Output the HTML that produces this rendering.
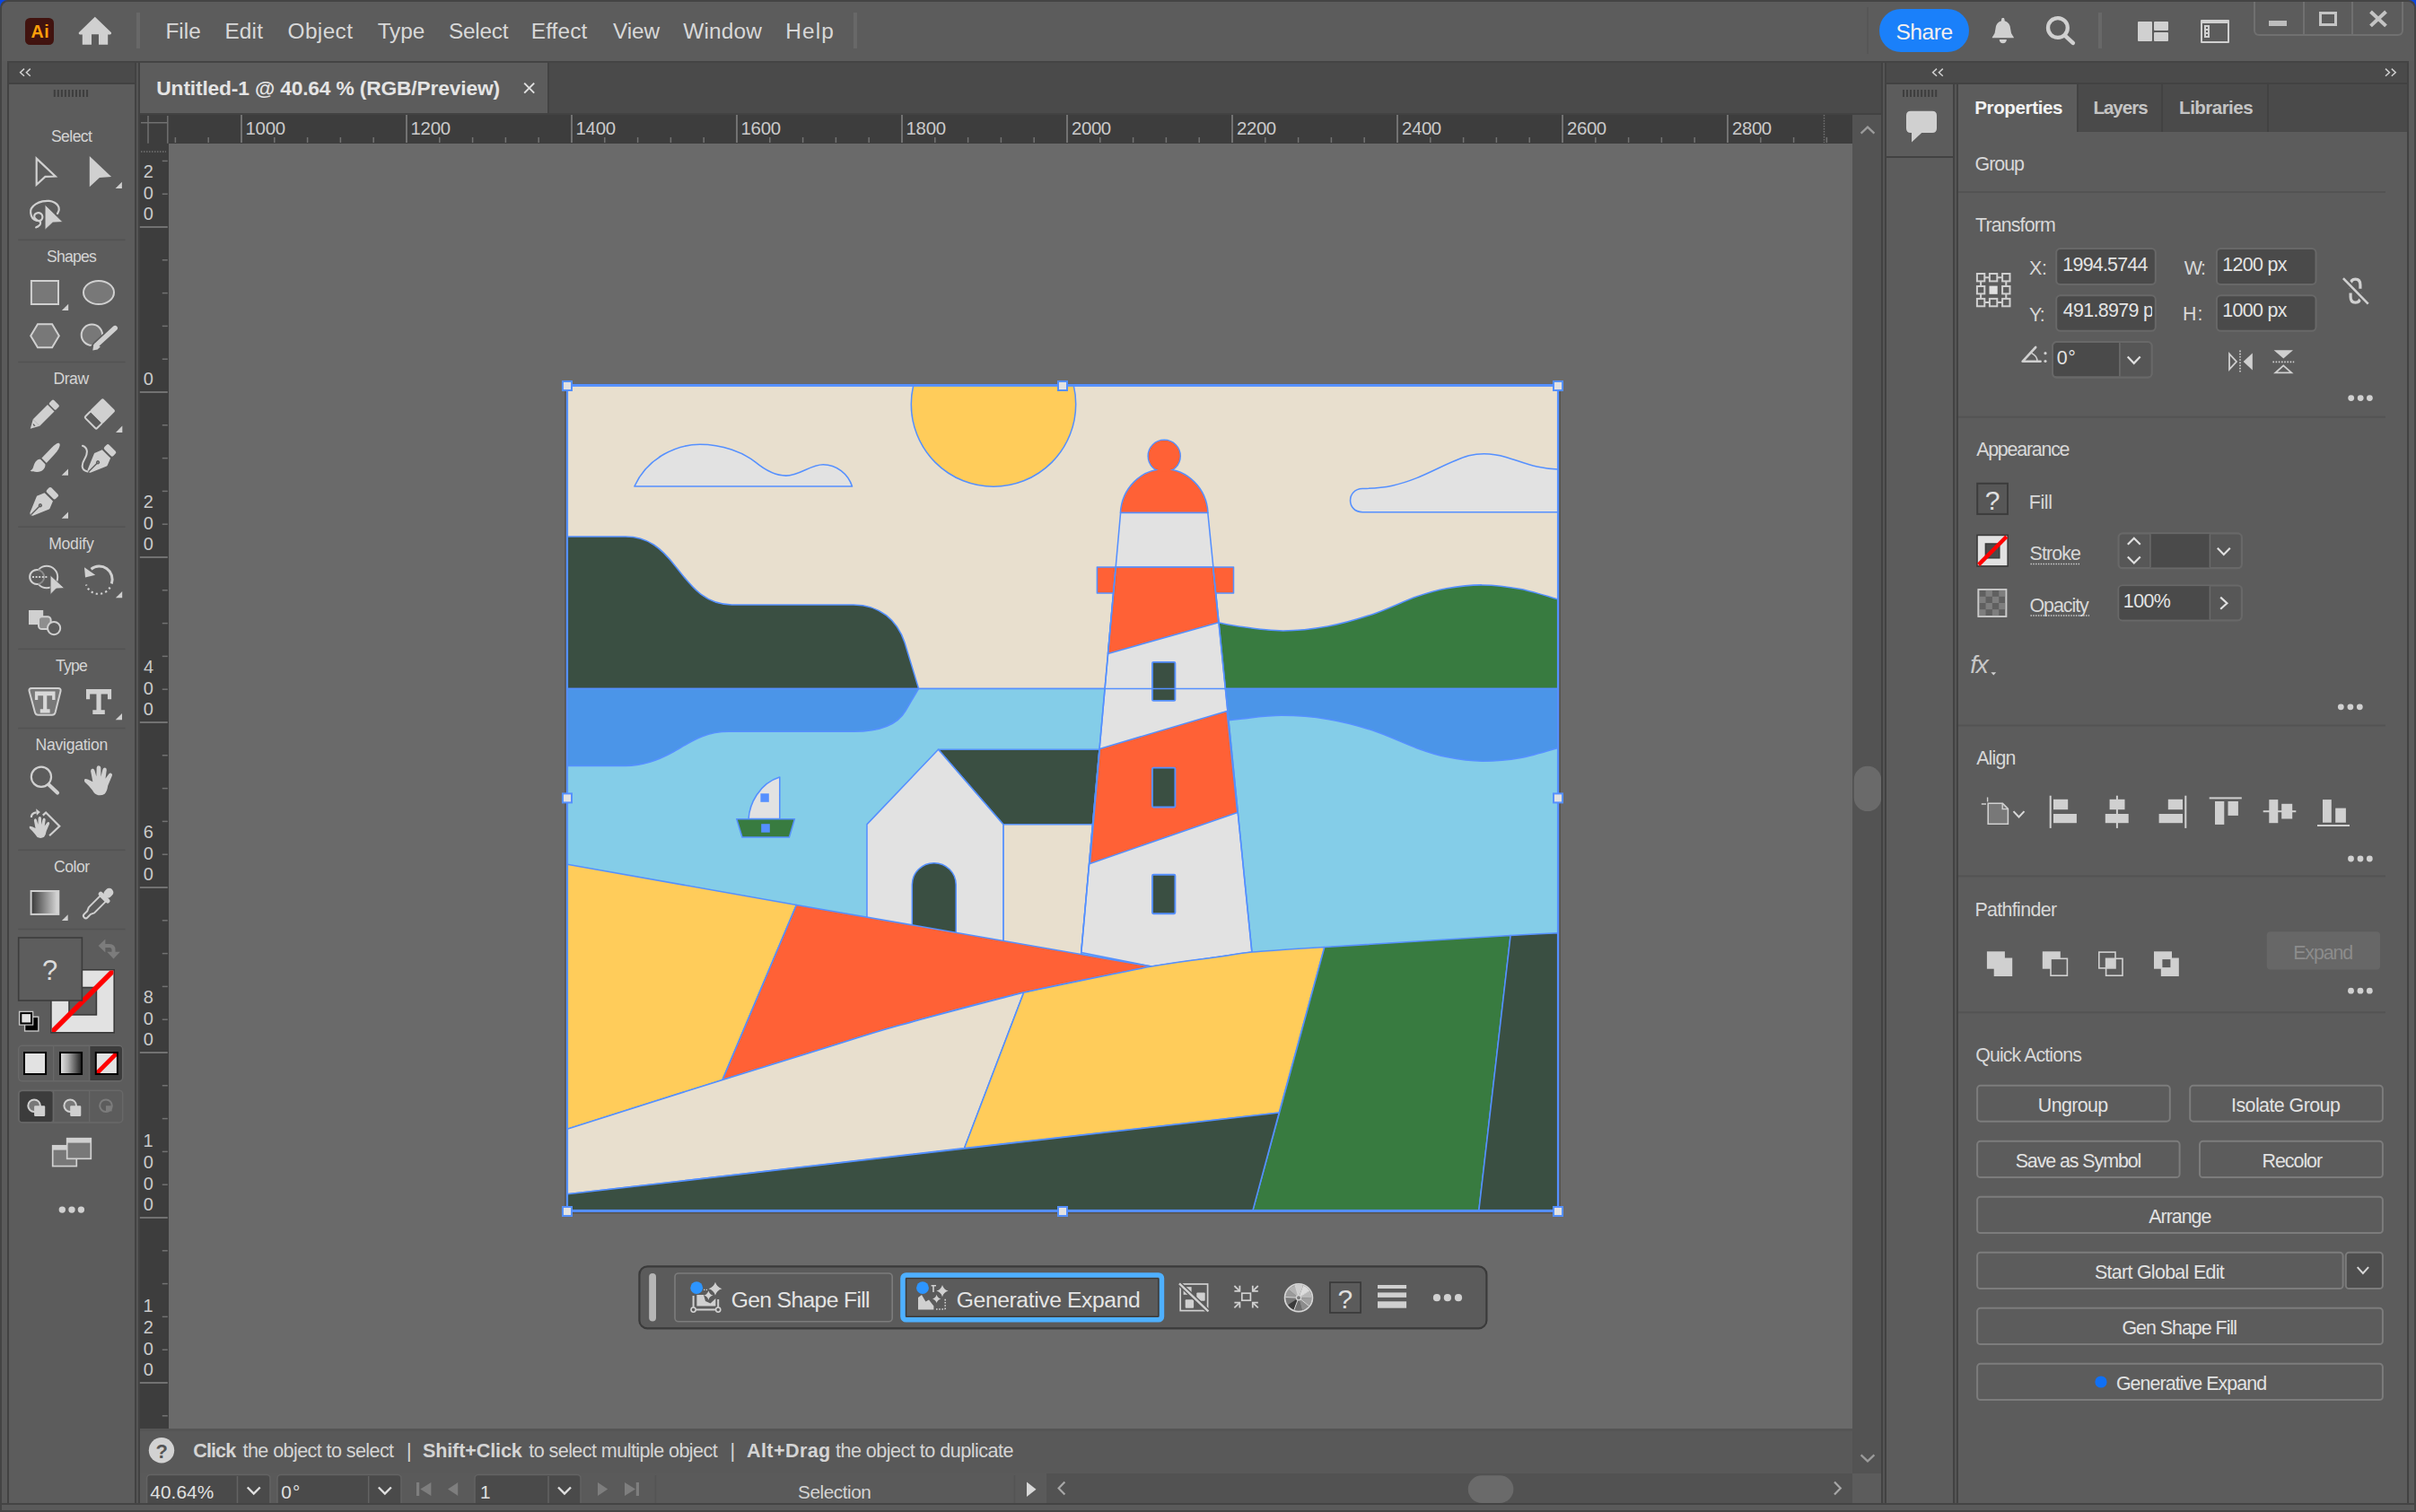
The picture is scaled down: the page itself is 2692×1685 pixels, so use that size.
<!DOCTYPE html>
<html><head><meta charset="utf-8"><title>Adobe Illustrator</title>
<style>
html,body{margin:0;padding:0;}
body{width:2692px;height:1685px;overflow:hidden;background:#424242;position:relative;font-family:"Liberation Sans",sans-serif;}
.b{position:absolute;box-sizing:border-box;}
.t{position:absolute;white-space:pre;font-family:"Liberation Sans",sans-serif;}
svg{position:absolute;overflow:visible;}
</style></head><body>
<div class="b" style="left:0px;top:0px;width:2692px;height:20px;background:#0a46e0;"></div>
<div class="b" style="left:0px;top:0px;width:2692px;height:1685px;background:#444;border-radius:8.5px 8.5px 0 0;"></div>
<div class="b" style="left:2.1px;top:2px;width:2688px;height:1681.1px;background:#5a5a5a;border-radius:7.5px 7.5px 0 0;"></div>
<div class="b" style="left:2.1px;top:2px;width:2688px;height:66px;background:#5c5c5c;border-radius:7.5px 7.5px 0 0;"></div>
<div class="b" style="left:8.3px;top:67.8px;width:2675.8px;height:2px;background:#444;"></div>
<div class="b" style="left:28px;top:20px;width:32px;height:30px;background:#41130f;border-radius:5.5px;"></div>
<div class="t" style="left:34.51px;top:24px;font-size:19.6px;line-height:22px;color:#ff9f0a;font-weight:bold;letter-spacing:0.476px;">Ai</div>
<svg style="left:86px;top:17px" width="40" height="36" viewBox="86 17 40 36"><path d="M105.8 18.8 L124 36.2 Q124.6 37.6 123 38.4 L120.2 38.4 L120.2 49.8 L110 49.8 L110 38.2 L102 38.2 L102 49.8 L91.8 49.8 L91.8 38.4 L88.8 38.4 Q87.2 37.6 87.8 36.2 Z" fill="#d0d0d0"/></svg>
<div class="b" style="left:152px;top:14px;width:4px;height:40px;background:#686868;"></div>
<div class="t" style="left:184.40px;top:21px;font-size:24.4px;line-height:27px;color:#d8d8d8;letter-spacing:0.023px;">File</div>
<div class="t" style="left:250.40px;top:21px;font-size:24.4px;line-height:27px;color:#d8d8d8;letter-spacing:0.179px;">Edit</div>
<div class="t" style="left:320.54px;top:21px;font-size:24.4px;line-height:27px;color:#d8d8d8;letter-spacing:0.383px;">Object</div>
<div class="t" style="left:420.65px;top:21px;font-size:24.4px;line-height:27px;color:#d8d8d8;letter-spacing:-0.071px;">Type</div>
<div class="t" style="left:499.89px;top:21px;font-size:24.4px;line-height:27px;color:#d8d8d8;letter-spacing:-0.246px;">Select</div>
<div class="t" style="left:591.80px;top:21px;font-size:24.4px;line-height:27px;color:#d8d8d8;letter-spacing:0.100px;">Effect</div>
<div class="t" style="left:683.09px;top:21px;font-size:24.4px;line-height:27px;color:#d8d8d8;letter-spacing:-0.146px;">View</div>
<div class="t" style="left:761.29px;top:21px;font-size:24.4px;line-height:27px;color:#d8d8d8;letter-spacing:0.173px;">Window</div>
<div class="t" style="left:875.30px;top:21px;font-size:24.4px;line-height:27px;color:#d8d8d8;letter-spacing:1.081px;">Help</div>
<div class="b" style="left:950.5px;top:14px;width:4px;height:40px;background:#686868;"></div>
<div class="b" style="left:2080px;top:8px;width:1.5px;height:52px;background:#565656;"></div>
<div class="b" style="left:2094px;top:10px;width:100.2px;height:48.2px;background:#1a80fa;border-radius:24.1px;"></div>
<div class="t" style="left:2112.38px;top:22px;font-size:24.6px;line-height:27px;color:#f4efef;letter-spacing:-0.483px;">Share</div>
<svg style="left:2215px;top:15px" width="34" height="38" viewBox="2215 15 34 38">
<path d="M2231.8 19.8 q1.6 0 1.8 2.2 l0 1.2 q6.2 1.8 6.6 9.2 q0.3 5 2.6 7.6 q1.2 1.2 1.1 2.2 l-24.2 0 q-0.1 -1 1.1 -2.2 q2.3 -2.6 2.6 -7.6 q0.4 -7.4 6.6 -9.2 l0 -1.2 q0.2 -2.2 1.8 -2.2 Z" fill="#d0d0d0"/>
<path d="M2227.7 43.9 l8.2 0 q-0.6 4.3 -4.1 4.3 q-3.5 0 -4.1 -4.3 Z" fill="#d0d0d0"/></svg>
<svg style="left:2275px;top:14px" width="42" height="40" viewBox="2275 14 42 40"><circle cx="2292.9" cy="31" r="10.9" fill="none" stroke="#d0d0d0" stroke-width="4.3"/><path d="M2300.8 39.6 L2309.8 47.9" stroke="#d0d0d0" stroke-width="4.6" stroke-linecap="round"/></svg>
<div class="b" style="left:2338.3px;top:14.3px;width:3.7px;height:39.7px;background:#686868;"></div>
<div class="b" style="left:2382px;top:24px;width:15.8px;height:21.8px;background:#d0d0d0;border-radius:1px;"></div>
<div class="b" style="left:2400.2px;top:24px;width:15.9px;height:9.7px;background:#d0d0d0;border-radius:1px;"></div>
<div class="b" style="left:2400.2px;top:36px;width:15.9px;height:9.8px;background:#d0d0d0;border-radius:1px;"></div>
<div class="b" style="left:2451.8px;top:22px;width:32.4px;height:25.8px;border:2px solid #d0d0d0;border-top-width:4px;border-radius:1px;"></div>
<div class="b" style="left:2455.8px;top:28.2px;width:6.2px;height:13.4px;background:#d0d0d0;"></div>
<div class="b" style="left:2457.7px;top:30.2px;width:2.4px;height:2px;background:#5c5c5c;"></div>
<div class="b" style="left:2457.7px;top:34.2px;width:2.4px;height:2px;background:#5c5c5c;"></div>
<div class="b" style="left:2457.7px;top:38.2px;width:2.4px;height:2px;background:#5c5c5c;"></div>
<div class="b" style="left:2510.5px;top:2px;width:167.3px;height:37.8px;border:2px solid #707070;border-top:none;border-radius:0 0 6px 6px;"></div>
<div class="b" style="left:2566px;top:2px;width:1.8px;height:37px;background:#707070;"></div>
<div class="b" style="left:2620px;top:2px;width:1.8px;height:37px;background:#707070;"></div>
<div class="b" style="left:2527.9px;top:23.1px;width:20.1px;height:5.8px;background:#bdbdbd;"></div>
<div class="b" style="left:2584px;top:13px;width:19.9px;height:15.9px;border:3.9px solid #c4c4c4;"></div>
<svg style="left:2636px;top:10px" width="28" height="22" viewBox="2636 10 28 22"><path d="M2641.5 13 L2658.5 28.9 M2658.5 13 L2641.5 28.9" stroke="#c4c4c4" stroke-width="4" fill="none"/></svg>
<div class="b" style="left:8.3px;top:69.8px;width:144px;height:1606px;background:#424242;"></div>
<div class="b" style="left:10px;top:69.8px;width:140.3px;height:22.2px;background:#4a4a4a;"></div>
<div class="b" style="left:10px;top:94.2px;width:140.3px;height:1581px;background:#5c5c5c;"></div>
<div class="b" style="left:151.8px;top:69.8px;width:2px;height:1606px;background:#555;"></div>
<svg style="left:0;top:0" width="160" height="1685" viewBox="0 0 160 1685">
<path d="M27 76.6 L22.6 80.7 L27 84.8 M33.8 76.6 L29.4 80.7 L33.8 84.8" stroke="#d0d0d0" stroke-width="1.5" fill="none"/>
<rect x="59.80" y="100" width="2" height="8" fill="#3e3e3e"/>
<rect x="63.83" y="100" width="2" height="8" fill="#3e3e3e"/>
<rect x="67.86" y="100" width="2" height="8" fill="#3e3e3e"/>
<rect x="71.89" y="100" width="2" height="8" fill="#3e3e3e"/>
<rect x="75.92" y="100" width="2" height="8" fill="#3e3e3e"/>
<rect x="79.95" y="100" width="2" height="8" fill="#3e3e3e"/>
<rect x="83.98" y="100" width="2" height="8" fill="#3e3e3e"/>
<rect x="88.01" y="100" width="2" height="8" fill="#3e3e3e"/>
<rect x="92.04" y="100" width="2" height="8" fill="#3e3e3e"/>
<rect x="96.07" y="100" width="2" height="8" fill="#3e3e3e"/>
<rect x="20.2" y="266.5" width="119.4" height="1.6" fill="#535353"/>
<rect x="20.2" y="402.7" width="119.4" height="1.6" fill="#535353"/>
<rect x="20.2" y="586.4000000000001" width="119.4" height="1.6" fill="#535353"/>
<rect x="20.2" y="722.5" width="119.4" height="1.6" fill="#535353"/>
<rect x="20.2" y="810.8000000000001" width="119.4" height="1.6" fill="#535353"/>
<rect x="20.2" y="946.5" width="119.4" height="1.6" fill="#535353"/>
<rect x="20.2" y="1034.7" width="119.4" height="1.6" fill="#535353"/>
<path d="M40.7 176.6 L40.7 205.7 L50.4 196.9 L61.7 196.5 Z" stroke="#d0d0d0" stroke-width="2.2" fill="none" stroke-linejoin="miter"/>
<path d="M99.8 174 L99.8 208.2 L110.9 198 L124.1 197 Z" fill="#d0d0d0"/>
<path d="M135.9 202.79999999999998 L135.9 210.1 L128.6 210.1 Z" fill="#d0d0d0"/>
<path d="M64.0 238.1 C64.3 237.4 65.6 235.3 65.7 233.9 C65.9 232.4 65.6 230.8 64.7 229.4 C63.9 228.0 62.4 226.6 60.8 225.7 C59.1 224.8 57.0 224.1 54.8 223.9 C52.6 223.7 49.8 223.9 47.4 224.4 C44.9 225.0 42.0 226.1 39.9 227.4 C37.8 228.7 35.9 230.7 34.9 232.4 C34.0 234.0 33.9 235.5 34.2 237.4 C34.4 239.2 35.3 241.9 36.4 243.3 C37.5 244.7 39.3 245.5 40.9 245.8 C42.5 246.1 44.8 246.0 45.9 245.3 C46.9 244.6 47.4 243.0 47.4 241.8 C47.4 240.7 46.7 239.1 45.9 238.3 C45.0 237.6 43.5 237.0 42.4 237.1 C41.2 237.2 39.6 238.0 38.9 238.8 C38.2 239.7 38.0 241.2 38.4 242.3 C38.8 243.4 40.3 244.5 41.4 245.3 C42.5 246.1 44.3 246.5 44.9 247.3 C45.4 248.1 45.0 249.4 44.6 250.3 C44.2 251.1 43.1 251.8 42.4 252.3 C41.6 252.8 40.5 253.1 40.2 253.3" stroke="#d0d0d0" stroke-width="2.2" fill="none" stroke-linecap="round"/>
<path d="M50.1 228.0 L50.1 256.2 L58.8 248.0 L70.0 247.5 Z" fill="#d0d0d0" stroke="#5c5c5c" stroke-width="0.8"/>
<rect x="34.9" y="313" width="30.1" height="26" fill="#787878" stroke="#d0d0d0" stroke-width="2"/>
<path d="M76.2 338.7 L76.2 346 L68.9 346 Z" fill="#d0d0d0"/>
<ellipse cx="110" cy="326" rx="17" ry="13" fill="#787878" stroke="#d0d0d0" stroke-width="2"/>
<path d="M34.2 374.2 L42 361.3 L58.1 361.3 L65.8 374.2 L58.1 387.2 L42 387.2 Z" fill="#787878" stroke="#d0d0d0" stroke-width="2"/>
<circle cx="102.4" cy="373.3" r="11.7" fill="#787878" stroke="#d0d0d0" stroke-width="2"/>
<path d="M128 365.8 L107.5 384.8 L103.6 390.4" stroke="#5c5c5c" stroke-width="9" fill="none" stroke-linecap="round"/>
<path d="M128.2 365.6 L109 383.3" stroke="#d0d0d0" stroke-width="5.6" fill="none" stroke-linecap="round"/>
<path d="M106.2 381.8 L111.8 386.6 L108.6 389.6 L103.3 390.6 L104.3 384.2 Z" fill="#d0d0d0"/>
<g transform="translate(33.8 477.7) rotate(-45)"><path d="M0 0 L9.5 -5.3 L9.5 5.3 Z M3.2 0 L6.4 1.8 L6.4 -1.8 Z" fill="#d0d0d0" fill-rule="evenodd"/><rect x="9.5" y="-5.3" width="23" height="10.6" fill="#d0d0d0"/><rect x="34" y="-5.3" width="7" height="10.6" rx="1.6" fill="#d0d0d0"/><path d="M2.2 0 L5 -1.5 L5 1.5 Z" fill="#d0d0d0"/></g>
<g transform="translate(109.9 462.4) rotate(-45)"><rect x="-4" y="-10.2" width="20.5" height="20.4" rx="2" fill="#d0d0d0"/><rect x="-13" y="-9.2" width="10" height="18.4" rx="1.5" fill="none" stroke="#d0d0d0" stroke-width="2"/></g>
<path d="M136.3 474.59999999999997 L136.3 481.9 L129.0 481.9 Z" fill="#d0d0d0"/>
<path d="M66 494 C68 495.5 65.5 501 61 506 L51.8 516 L46.4 510.5 L57.5 499 C61.5 495 64.5 493 66 494 Z" fill="#d0d0d0"/>
<path d="M45 511.8 L50.4 517.3 C51 522 47 526.2 41 526 C38 526 35.5 525.8 33.6 524.6 C37 523.4 37 520 38.5 516.5 C40 513 42.5 511.5 45 511.8 Z" fill="#d0d0d0"/>
<path d="M76 522.5 L76 529.8 L68.7 529.8 Z" fill="#d0d0d0"/>
<path d="M92 496.8 C98 499 98 505 94.5 511 C91 517 89.5 524 97.5 525.4" stroke="#d0d0d0" stroke-width="2" fill="none" stroke-linecap="round"/>
<g transform="translate(98.2 526.2) rotate(-45)"><path d="M1.4 -2.3 L19.4 -9.9 Q20.4 -10.2 21.2 -9.6 L28.7 -6.6 L28.7 6.6 L21.2 9.6 Q20.4 10.2 19.4 9.9 L1.4 2.3 Q-0.8 0 1.4 -2.3 Z" fill="#d0d0d0"/><path d="M0.6 0 L14 0" stroke="#5c5c5c" stroke-width="1.4"/><circle cx="15.4" cy="0" r="2.1" fill="#5c5c5c"/><circle cx="15.4" cy="0" r="0.9" fill="#8c8c8c"/><rect x="30.8" y="-7" width="7.3" height="14" rx="2" fill="#d0d0d0"/></g>
<g transform="translate(34 574.1) rotate(-45)"><path d="M1.4 -2.3 L19.4 -9.9 Q20.4 -10.2 21.2 -9.6 L28.7 -6.6 L28.7 6.6 L21.2 9.6 Q20.4 10.2 19.4 9.9 L1.4 2.3 Q-0.8 0 1.4 -2.3 Z" fill="#d0d0d0"/><path d="M0.6 0 L14 0" stroke="#5c5c5c" stroke-width="1.4"/><circle cx="15.4" cy="0" r="2.1" fill="#5c5c5c"/><circle cx="15.4" cy="0" r="0.9" fill="#8c8c8c"/><rect x="30.8" y="-7" width="7.3" height="14" rx="2" fill="#d0d0d0"/></g>
<path d="M76 570.5 L76 577.8 L68.7 577.8 Z" fill="#d0d0d0"/>
<circle cx="52" cy="643" r="12.2" fill="none" stroke="#d0d0d0" stroke-width="2"/>
<circle cx="41.2" cy="643" r="8" fill="#5c5c5c" stroke="#8c8c8c" stroke-width="2"/>
<path d="M42.67 635.14 A8 8 0 1 0 42.67 650.86" fill="none" stroke="#d0d0d0" stroke-width="2"/>
<path d="M36 643 L54 643" stroke="#d0d0d0" stroke-width="2" stroke-dasharray="2 1.6"/>
<path d="M56.1 641 L56.1 662.6 L62.6 656 L71.8 655.6 Z" fill="#d0d0d0" stroke="#5c5c5c" stroke-width="0.8"/>
<path d="M101.5 634.2 A14.6 14.6 0 0 1 124.3 650.5" fill="none" stroke="#d0d0d0" stroke-width="3"/>
<path d="M94 632.2 L106.2 640.7 L95 643.5 Z" fill="#d0d0d0"/>
<path d="M122.6 654.6 A14.6 14.6 0 0 1 96 651.5" fill="none" stroke="#d0d0d0" stroke-width="2.2" stroke-dasharray="2.2 3.2"/>
<path d="M136.2 658.9000000000001 L136.2 666.2 L128.89999999999998 666.2 Z" fill="#d0d0d0"/>
<rect x="32" y="680" width="16.2" height="16.1" fill="#d0d0d0"/>
<rect x="43" y="687.2" width="13.6" height="13.8" rx="3.6" fill="#8e8e8e" stroke="#d0d0d0" stroke-width="2"/>
<circle cx="60.1" cy="700.1" r="7.1" fill="#5c5c5c" stroke="#d0d0d0" stroke-width="2"/>
<path d="M35.2 767 L64.8 767 Q68.3 767 67.5 770.2 L61.6 794 Q60.8 796.8 58 796.8 L42.6 796.8 Q39.8 796.8 39 794 L32.6 770.2 Q31.7 767 35.2 767 Z" fill="#787878" stroke="#d0d0d0" stroke-width="2"/>
<path d="M38.9 770.4 L61.5 770.4 L61.5 780.0 L58.14 780.0 L58.14 775.1999999999999 L52.300000000000004 775.1999999999999 L52.300000000000004 790.3199999999999 L55.624 790.3199999999999 L55.624 794.4 L44.776 794.4 L44.776 790.3199999999999 L48.1 790.3199999999999 L48.1 775.1999999999999 L42.26 775.1999999999999 L42.26 780.0 L38.9 780.0 Z" fill="#d8d8d8"/>
<path d="M96 767.9 L124.1 767.9 L124.1 779.18 L119.94 779.18 L119.94 773.54 L112.64999999999999 773.54 L112.64999999999999 791.306 L116.794 791.306 L116.794 796.1 L103.306 796.1 L103.306 791.306 L107.45 791.306 L107.45 773.54 L100.16 773.54 L100.16 779.18 L96 779.18 Z" fill="#d0d0d0"/>
<path d="M136 794.9000000000001 L136 802.2 L128.7 802.2 Z" fill="#d0d0d0"/>
<circle cx="45.95" cy="865.75" r="11.1" fill="none" stroke="#d0d0d0" stroke-width="2.2"/>
<path d="M54.4 874.4 L64 883.6" stroke="#d0d0d0" stroke-width="4.1" stroke-linecap="round"/>
<g transform="translate(93.8 853.3) scale(1.0)"><g transform="scale(0.06614) translate(-1040 -125)"><path d="M1048 350 Q1070 345 1110 360 L1185 395 L1150 215 Q1150 180 1180 172 Q1210 175 1215 205 L1245 305 L1250 160 Q1255 125 1285 125 Q1318 128 1320 160 L1322 310 L1352 190 Q1362 158 1392 160 Q1422 168 1418 200 L1398 345 L1455 265 Q1478 238 1502 255 Q1520 275 1508 300 L1440 460 Q1425 560 1385 600 Q1340 628 1280 622 Q1215 610 1180 540 Q1120 460 1050 400 Q1035 375 1048 350 Z" fill="#d0d0d0"/></g></g>
<path d="M47.8 908.6 L51.1 905.5 L66.3 920.7 L55.1 931.3" fill="none" stroke="#d0d0d0" stroke-width="2.2"/>
<g transform="translate(32.6 910.1) scale(0.723)"><g transform="scale(0.06614) translate(-1040 -125)"><path d="M1048 350 Q1070 345 1110 360 L1185 395 L1150 215 Q1150 180 1180 172 Q1210 175 1215 205 L1245 305 L1250 160 Q1255 125 1285 125 Q1318 128 1320 160 L1322 310 L1352 190 Q1362 158 1392 160 Q1422 168 1418 200 L1398 345 L1455 265 Q1478 238 1502 255 Q1520 275 1508 300 L1440 460 Q1425 560 1385 600 Q1340 628 1280 622 Q1215 610 1180 540 Q1120 460 1050 400 Q1035 375 1048 350 Z" fill="#d0d0d0"/></g></g>
<path d="M34.9 911 Q34.6 906.4 40.6 905.4" fill="none" stroke="#d0d0d0" stroke-width="2.2"/>
<path d="M40.2 901.2 L44.8 904.9 L40.9 908.8 Z" fill="#d0d0d0"/>
<defs><linearGradient id="g1" x1="0" x2="1" y1="0" y2="0"><stop offset="0" stop-color="#383838"/><stop offset="1" stop-color="#dcdcdc"/></linearGradient><linearGradient id="g2" x1="0" x2="1" y1="0" y2="0"><stop offset="0" stop-color="#e4e4e4"/><stop offset="0.35" stop-color="#b0b0b0"/><stop offset="1" stop-color="#1c1c1c"/></linearGradient></defs>
<rect x="34.6" y="993" width="30.7" height="25.9" fill="url(#g1)" stroke="#d0d0d0" stroke-width="2"/>
<path d="M75.7 1019.2 L75.7 1026 L68.9 1026 Z" fill="#d0d0d0"/>
<g transform="translate(95.6 1020.6) rotate(-45)"><path d="M0 -2.6 Q-2.6 -2.6 -2.6 0 Q-2.6 2.6 0 2.6 L5 2.6 L9 4.4 L27 4.4 L27 -4.4 L9 -4.4 L5 -2.6 Z" fill="none" stroke="#d0d0d0" stroke-width="2" stroke-linejoin="round"/><rect x="26.5" y="-8" width="5" height="16" rx="2.2" fill="#d0d0d0"/><rect x="30" y="-4.6" width="11.5" height="9.2" rx="4.4" fill="#d0d0d0"/></g>
<rect x="56.9" y="1080.8" width="70.3" height="70" fill="#e2e2e2" stroke="#3a3a3a" stroke-width="1.6"/>
<rect x="77" y="1100.5" width="30.4" height="30.4" fill="#5c5c5c" stroke="#3a3a3a" stroke-width="1.6"/>
<clipPath id="sbx"><rect x="57.7" y="1081.6" width="68.7" height="68.4"/></clipPath><path d="M55 1153 L129 1079" stroke="#ff0000" stroke-width="5.6" clip-path="url(#sbx)"/>
<rect x="20.7" y="1045" width="70.7" height="70" fill="#5d5d5d" stroke="#3c3c3c" stroke-width="1.6"/>
<path d="M116.5 1054 L122 1054 Q126.5 1054 126.5 1058.5 L126.5 1062" fill="none" stroke="#7c7c7c" stroke-width="4"/><path d="M109.6 1054 L117.4 1046.6 L117.4 1061.4 Z" fill="#7c7c7c"/><path d="M119.2 1060.8 L133.8 1060.8 L126.5 1068.6 Z" fill="#7c7c7c"/>
<rect x="27.6" y="1133.2" width="15.2" height="15.8" fill="#000" stroke="#c8c8c8" stroke-width="1.4"/>
<rect x="21.6" y="1127.4" width="15" height="14.6" fill="#e2e2e2" stroke="#c8c8c8" stroke-width="1.4"/>
<rect x="23.3" y="1129.1" width="11.8" height="11.4" fill="#e2e2e2" stroke="#000" stroke-width="2"/>
<rect x="100.2" y="1166" width="36" height="38" fill="#3c3c3c"/>
<rect x="20.7" y="1165.3" width="116" height="39.5" rx="4" fill="none" stroke="#686868" stroke-width="1.5"/>
<path d="M59.6 1166 L59.6 1204 M99.6 1166 L99.6 1204" stroke="#686868" stroke-width="1.3"/>
<rect x="27" y="1173" width="24.1" height="24" fill="#e2e2e2" stroke="#000" stroke-width="2"/>
<rect x="67" y="1173" width="24.1" height="24" fill="url(#g2)" stroke="#000" stroke-width="2"/>
<rect x="106.8" y="1173" width="24.1" height="24" fill="#e2e2e2"/>
<clipPath id="sw3"><rect x="106.8" y="1173" width="24.1" height="24"/></clipPath><path d="M104.8 1199.2 L133 1170.8" stroke="#ff0000" stroke-width="4.8" clip-path="url(#sw3)"/>
<rect x="106.8" y="1173" width="24.1" height="24" fill="none" stroke="#000" stroke-width="2"/>
<rect x="21.9" y="1216.2" width="36.6" height="34" rx="3" fill="#3c3c3c"/>
<rect x="20.7" y="1215.2" width="116" height="35.8" rx="4" fill="none" stroke="#686868" stroke-width="1.5"/>
<path d="M59.6 1216 L59.6 1250 M99.6 1216 L99.6 1250" stroke="#686868" stroke-width="1.3"/>
<circle cx="38.1" cy="1232.2" r="6.8" fill="#787878" stroke="#d0d0d0" stroke-width="2"/>
<rect x="38.1" y="1232.2" width="12.1" height="11.8" rx="1.2" fill="#d0d0d0"/>
<circle cx="78.2" cy="1232.2" r="6.8" fill="#787878" stroke="#d0d0d0" stroke-width="2"/>
<rect x="78.2" y="1232.2" width="12.1" height="11.8" rx="1.2" fill="#d0d0d0"/>
<circle cx="118" cy="1232.2" r="6.8" fill="none" stroke="#7c7c7c" stroke-width="2"/><rect x="118" y="1232.2" width="6.6" height="6.2" fill="#7c7c7c"/>
<rect x="58.7" y="1276.8" width="26.6" height="22.8" fill="#787878" stroke="#d0d0d0" stroke-width="1.7"/><rect x="58" y="1276" width="28" height="5.6" fill="#d0d0d0"/>
<rect x="74.7" y="1268.7" width="26.6" height="22.6" fill="#787878" stroke="#d0d0d0" stroke-width="1.7"/><rect x="74" y="1268" width="28" height="5.6" fill="#d0d0d0"/>
<circle cx="69.3" cy="1348.1" r="3.7" fill="#d0d0d0"/>
<circle cx="80" cy="1348.1" r="3.7" fill="#d0d0d0"/>
<circle cx="90.4" cy="1348.1" r="3.7" fill="#d0d0d0"/>
</svg>
<div class="t" style="left:56.90px;top:142px;font-size:17.6px;line-height:20px;color:#d4d4d4;letter-spacing:-0.558px;">Select</div>
<div class="t" style="left:52.00px;top:276px;font-size:17.6px;line-height:20px;color:#d4d4d4;letter-spacing:-0.771px;">Shapes</div>
<div class="t" style="left:59.46px;top:412px;font-size:17.6px;line-height:20px;color:#d4d4d4;letter-spacing:-0.456px;">Draw</div>
<div class="t" style="left:54.16px;top:596px;font-size:17.6px;line-height:20px;color:#d4d4d4;letter-spacing:-0.252px;">Modify</div>
<div class="t" style="left:62.10px;top:732px;font-size:17.6px;line-height:20px;color:#d4d4d4;letter-spacing:-0.850px;">Type</div>
<div class="t" style="left:39.46px;top:820px;font-size:17.6px;line-height:20px;color:#d4d4d4;letter-spacing:-0.253px;">Navigation</div>
<div class="t" style="left:60.11px;top:956px;font-size:17.6px;line-height:20px;color:#d4d4d4;letter-spacing:-0.518px;">Color</div>
<div class="t" style="left:46.92px;top:1064px;font-size:31px;line-height:35px;color:#dcdcdc;">?</div>
<div class="b" style="left:153.8px;top:69.8px;width:1948.2px;height:1606px;background:#424242;"></div>
<div class="b" style="left:155.8px;top:70px;width:1940.4px;height:56px;background:#4a4a4a;"></div>
<div class="b" style="left:155.8px;top:70px;width:454.2px;height:56px;background:#5c5c5c;"></div>
<div class="b" style="left:610px;top:70px;width:2px;height:56px;background:#424242;"></div>
<div class="b" style="left:155.8px;top:126px;width:1940.4px;height:1.8px;background:#424242;"></div>
<div class="t" style="left:174.33px;top:85px;font-size:22.8px;line-height:26px;color:#e4e4e4;font-weight:bold;letter-spacing:-0.170px;">Untitled-1 @ 40.64 % (RGB/Preview)</div>
<svg style="left:575px;top:85px" width="30" height="26" viewBox="575 85 30 26"><path d="M584.2 92.6 L595.2 103.6 M595.2 92.6 L584.2 103.6" stroke="#e0e0e0" stroke-width="2" fill="none"/></svg>
<div class="b" style="left:155.8px;top:127.8px;width:1908.2px;height:32px;background:#3d3d3d;"></div>
<div class="b" style="left:155.8px;top:127.8px;width:32.4px;height:1464.2px;background:#3d3d3d;"></div>
<div class="b" style="left:188.2px;top:159.7px;width:1875.8px;height:1433px;background:#6a6a6a;"></div>
<div class="b" style="left:2064px;top:127.5px;width:32.2px;height:1548px;background:#535353;"></div>
<div class="b" style="left:155.8px;top:1592.8px;width:1908.2px;height:49px;background:#595959;"></div>
<div class="b" style="left:155.8px;top:1591.8px;width:1908.2px;height:3px;background:#555;"></div>
<div class="b" style="left:155.8px;top:1641.5px;width:1940.4px;height:34px;background:#5a5a5a;"></div>
<div class="b" style="left:1166.2px;top:1642.3px;width:897.8px;height:34px;background:#525252;"></div>
<div class="b" style="left:2064px;top:1641.9px;width:32.2px;height:34px;background:#5c5c5c;"></div>
<svg style="left:0;top:0" width="2692" height="1685" viewBox="0 0 2692 1685">
<path d="M165 129 L165 159.7 M186.8 129 L186.8 159.7 M157 136.8 L187.5 136.8" stroke="#707070" stroke-width="1.5" fill="none"/>
<path d="M157 169 L185 169" stroke="#727272" stroke-width="1.4" stroke-dasharray="1.5 1.5"/>
<rect x="194.65" y="153" width="1.5" height="6" fill="#727272"/>
<rect x="231.45" y="153" width="1.5" height="6" fill="#727272"/>
<rect x="268.0" y="128" width="2" height="31" fill="#727272"/>
<rect x="305.05" y="153" width="1.5" height="6" fill="#727272"/>
<rect x="341.85" y="153" width="1.5" height="6" fill="#727272"/>
<rect x="378.65" y="153" width="1.5" height="6" fill="#727272"/>
<rect x="415.45" y="153" width="1.5" height="6" fill="#727272"/>
<rect x="452.0" y="128" width="2" height="31" fill="#727272"/>
<rect x="489.05" y="153" width="1.5" height="6" fill="#727272"/>
<rect x="525.85" y="153" width="1.5" height="6" fill="#727272"/>
<rect x="562.65" y="153" width="1.5" height="6" fill="#727272"/>
<rect x="599.45" y="153" width="1.5" height="6" fill="#727272"/>
<rect x="636.0" y="128" width="2" height="31" fill="#727272"/>
<rect x="673.05" y="153" width="1.5" height="6" fill="#727272"/>
<rect x="709.85" y="153" width="1.5" height="6" fill="#727272"/>
<rect x="746.65" y="153" width="1.5" height="6" fill="#727272"/>
<rect x="783.45" y="153" width="1.5" height="6" fill="#727272"/>
<rect x="820.0" y="128" width="2" height="31" fill="#727272"/>
<rect x="857.05" y="153" width="1.5" height="6" fill="#727272"/>
<rect x="893.85" y="153" width="1.5" height="6" fill="#727272"/>
<rect x="930.65" y="153" width="1.5" height="6" fill="#727272"/>
<rect x="967.45" y="153" width="1.5" height="6" fill="#727272"/>
<rect x="1004.0" y="128" width="2" height="31" fill="#727272"/>
<rect x="1041.05" y="153" width="1.5" height="6" fill="#727272"/>
<rect x="1077.85" y="153" width="1.5" height="6" fill="#727272"/>
<rect x="1114.65" y="153" width="1.5" height="6" fill="#727272"/>
<rect x="1151.45" y="153" width="1.5" height="6" fill="#727272"/>
<rect x="1188.0" y="128" width="2" height="31" fill="#727272"/>
<rect x="1225.05" y="153" width="1.5" height="6" fill="#727272"/>
<rect x="1261.85" y="153" width="1.5" height="6" fill="#727272"/>
<rect x="1298.65" y="153" width="1.5" height="6" fill="#727272"/>
<rect x="1335.45" y="153" width="1.5" height="6" fill="#727272"/>
<rect x="1372.0" y="128" width="2" height="31" fill="#727272"/>
<rect x="1409.05" y="153" width="1.5" height="6" fill="#727272"/>
<rect x="1445.85" y="153" width="1.5" height="6" fill="#727272"/>
<rect x="1482.65" y="153" width="1.5" height="6" fill="#727272"/>
<rect x="1519.45" y="153" width="1.5" height="6" fill="#727272"/>
<rect x="1556.0" y="128" width="2" height="31" fill="#727272"/>
<rect x="1593.05" y="153" width="1.5" height="6" fill="#727272"/>
<rect x="1629.85" y="153" width="1.5" height="6" fill="#727272"/>
<rect x="1666.65" y="153" width="1.5" height="6" fill="#727272"/>
<rect x="1703.45" y="153" width="1.5" height="6" fill="#727272"/>
<rect x="1740.0" y="128" width="2" height="31" fill="#727272"/>
<rect x="1777.05" y="153" width="1.5" height="6" fill="#727272"/>
<rect x="1813.85" y="153" width="1.5" height="6" fill="#727272"/>
<rect x="1850.65" y="153" width="1.5" height="6" fill="#727272"/>
<rect x="1887.45" y="153" width="1.5" height="6" fill="#727272"/>
<rect x="1924.0" y="128" width="2" height="31" fill="#727272"/>
<rect x="1961.05" y="153" width="1.5" height="6" fill="#727272"/>
<rect x="1997.85" y="153" width="1.5" height="6" fill="#727272"/>
<rect x="2034.65" y="153" width="1.5" height="6" fill="#727272"/>
<path d="M2032.5 128 L2032.5 159" stroke="#727272" stroke-width="1.4" stroke-dasharray="1.5 1.5"/>
<rect x="180.8" y="178.65" width="6" height="1.5" fill="#727272"/>
<rect x="180.8" y="215.45" width="6" height="1.5" fill="#727272"/>
<rect x="155.8" y="252.0" width="31" height="2" fill="#727272"/>
<rect x="180.8" y="289.05" width="6" height="1.5" fill="#727272"/>
<rect x="180.8" y="325.85" width="6" height="1.5" fill="#727272"/>
<rect x="180.8" y="362.65" width="6" height="1.5" fill="#727272"/>
<rect x="180.8" y="399.45" width="6" height="1.5" fill="#727272"/>
<rect x="155.8" y="436.0" width="31" height="2" fill="#727272"/>
<rect x="180.8" y="473.05" width="6" height="1.5" fill="#727272"/>
<rect x="180.8" y="509.85" width="6" height="1.5" fill="#727272"/>
<rect x="180.8" y="546.65" width="6" height="1.5" fill="#727272"/>
<rect x="180.8" y="583.45" width="6" height="1.5" fill="#727272"/>
<rect x="155.8" y="620.0" width="31" height="2" fill="#727272"/>
<rect x="180.8" y="657.05" width="6" height="1.5" fill="#727272"/>
<rect x="180.8" y="693.85" width="6" height="1.5" fill="#727272"/>
<rect x="180.8" y="730.65" width="6" height="1.5" fill="#727272"/>
<rect x="180.8" y="767.45" width="6" height="1.5" fill="#727272"/>
<rect x="155.8" y="804.0" width="31" height="2" fill="#727272"/>
<rect x="180.8" y="841.05" width="6" height="1.5" fill="#727272"/>
<rect x="180.8" y="877.85" width="6" height="1.5" fill="#727272"/>
<rect x="180.8" y="914.65" width="6" height="1.5" fill="#727272"/>
<rect x="180.8" y="951.45" width="6" height="1.5" fill="#727272"/>
<rect x="155.8" y="988.0" width="31" height="2" fill="#727272"/>
<rect x="180.8" y="1025.05" width="6" height="1.5" fill="#727272"/>
<rect x="180.8" y="1061.85" width="6" height="1.5" fill="#727272"/>
<rect x="180.8" y="1098.65" width="6" height="1.5" fill="#727272"/>
<rect x="180.8" y="1135.45" width="6" height="1.5" fill="#727272"/>
<rect x="155.8" y="1172.0" width="31" height="2" fill="#727272"/>
<rect x="180.8" y="1209.05" width="6" height="1.5" fill="#727272"/>
<rect x="180.8" y="1245.85" width="6" height="1.5" fill="#727272"/>
<rect x="180.8" y="1282.65" width="6" height="1.5" fill="#727272"/>
<rect x="180.8" y="1319.45" width="6" height="1.5" fill="#727272"/>
<rect x="155.8" y="1356.0" width="31" height="2" fill="#727272"/>
<rect x="180.8" y="1393.05" width="6" height="1.5" fill="#727272"/>
<rect x="180.8" y="1429.85" width="6" height="1.5" fill="#727272"/>
<rect x="180.8" y="1466.65" width="6" height="1.5" fill="#727272"/>
<rect x="180.8" y="1503.45" width="6" height="1.5" fill="#727272"/>
<rect x="155.8" y="1540.0" width="31" height="2" fill="#727272"/>
<rect x="180.8" y="1577.05" width="6" height="1.5" fill="#727272"/>
<path d="M2073.6 148.6 L2081 141.6 L2088.4 148.6" stroke="#9c9c9c" stroke-width="2.2" fill="none"/>
<path d="M2073.6 1621.4 L2081 1628.4 L2088.4 1621.4" stroke="#9c9c9c" stroke-width="2.2" fill="none"/>
<rect x="2065.8" y="853.7" width="30.4" height="50.4" rx="15.2" fill="#6a6a6a"/>
<path d="M1186.4 1651.6 L1179.6 1658.6 L1186.4 1665.6" stroke="#a8a8a8" stroke-width="2.2" fill="none"/>
<path d="M2044 1651.6 L2050.8 1658.6 L2044 1665.6" stroke="#a8a8a8" stroke-width="2.2" fill="none"/>
<rect x="1635.8" y="1644.2" width="50.6" height="30.7" rx="15.3" fill="#6a6a6a"/>
<path d="M1144 1651.5 L1144 1668 L1154.5 1659.8 Z" fill="#d8d8d8"/>
<rect x="1129.5" y="1644" width="1.6" height="31" fill="#545454"/>
<rect x="729.5" y="1644" width="1.6" height="31" fill="#545454"/>
<rect x="163.6" y="1643.4" width="137.4" height="37" rx="4" fill="#4a4a4a" stroke="#636363" stroke-width="1.5"/>
<rect x="263.75" y="1645" width="1.5" height="30" fill="#636363"/>
<path d="M275.75 1657.5 L282.75 1664.5 L289.75 1657.5" stroke="#e0e0e0" stroke-width="2.4" fill="none"/>
<rect x="309" y="1643.4" width="138" height="37" rx="4" fill="#4a4a4a" stroke="#636363" stroke-width="1.5"/>
<rect x="409.95" y="1645" width="1.5" height="30" fill="#636363"/>
<path d="M421.85 1657.5 L428.85 1664.5 L435.85 1657.5" stroke="#e0e0e0" stroke-width="2.4" fill="none"/>
<rect x="529" y="1643.4" width="118" height="37" rx="4" fill="#4a4a4a" stroke="#636363" stroke-width="1.5"/>
<rect x="610.25" y="1645" width="1.5" height="30" fill="#636363"/>
<path d="M622.0 1657.5 L629.0 1664.5 L636.0 1657.5" stroke="#e0e0e0" stroke-width="2.4" fill="none"/>
<rect x="464" y="1652" width="3.2" height="15" fill="#7e7e7e"/><path d="M480.4 1652 L480.4 1667 L468.4 1659.5 Z" fill="#7e7e7e"/>
<path d="M510.2 1652 L510.2 1667 L499 1659.5 Z" fill="#7e7e7e"/>
<path d="M666 1652 L666 1667 L677.2 1659.5 Z" fill="#7e7e7e"/>
<rect x="708.8" y="1652" width="3.2" height="15" fill="#7e7e7e"/><path d="M696 1652 L696 1667 L708 1659.5 Z" fill="#7e7e7e"/>
<circle cx="180" cy="1616.2" r="14.2" fill="#d2d2d2"/>
</svg>
<div class="t" style="left:273.45px;top:132px;font-size:20.4px;line-height:22px;color:#cacaca;letter-spacing:-0.210px;">1000</div>
<div class="t" style="left:457.45px;top:132px;font-size:20.4px;line-height:22px;color:#cacaca;letter-spacing:-0.210px;">1200</div>
<div class="t" style="left:641.45px;top:132px;font-size:20.4px;line-height:22px;color:#cacaca;letter-spacing:-0.210px;">1400</div>
<div class="t" style="left:825.45px;top:132px;font-size:20.4px;line-height:22px;color:#cacaca;letter-spacing:-0.210px;">1600</div>
<div class="t" style="left:1009.45px;top:132px;font-size:20.4px;line-height:22px;color:#cacaca;letter-spacing:-0.210px;">1800</div>
<div class="t" style="left:1193.97px;top:132px;font-size:20.4px;line-height:22px;color:#cacaca;letter-spacing:-0.386px;">2000</div>
<div class="t" style="left:1377.97px;top:132px;font-size:20.4px;line-height:22px;color:#cacaca;letter-spacing:-0.386px;">2200</div>
<div class="t" style="left:1561.97px;top:132px;font-size:20.4px;line-height:22px;color:#cacaca;letter-spacing:-0.386px;">2400</div>
<div class="t" style="left:1745.97px;top:132px;font-size:20.4px;line-height:22px;color:#cacaca;letter-spacing:-0.386px;">2600</div>
<div class="t" style="left:1929.97px;top:132px;font-size:20.4px;line-height:22px;color:#cacaca;letter-spacing:-0.386px;">2800</div>
<div class="t" style="left:159.84px;top:180px;font-size:20px;line-height:22px;color:#cacaca;">2</div>
<div class="t" style="left:159.84px;top:204px;font-size:20px;line-height:22px;color:#cacaca;">0</div>
<div class="t" style="left:159.84px;top:227px;font-size:20px;line-height:22px;color:#cacaca;">0</div>
<div class="t" style="left:159.84px;top:411px;font-size:20px;line-height:22px;color:#cacaca;">0</div>
<div class="t" style="left:159.84px;top:548px;font-size:20px;line-height:22px;color:#cacaca;">2</div>
<div class="t" style="left:159.84px;top:572px;font-size:20px;line-height:22px;color:#cacaca;">0</div>
<div class="t" style="left:159.84px;top:595px;font-size:20px;line-height:22px;color:#cacaca;">0</div>
<div class="t" style="left:159.90px;top:732px;font-size:20px;line-height:22px;color:#cacaca;">4</div>
<div class="t" style="left:159.84px;top:756px;font-size:20px;line-height:22px;color:#cacaca;">0</div>
<div class="t" style="left:159.84px;top:779px;font-size:20px;line-height:22px;color:#cacaca;">0</div>
<div class="t" style="left:159.77px;top:916px;font-size:20px;line-height:22px;color:#cacaca;">6</div>
<div class="t" style="left:159.84px;top:940px;font-size:20px;line-height:22px;color:#cacaca;">0</div>
<div class="t" style="left:159.84px;top:963px;font-size:20px;line-height:22px;color:#cacaca;">0</div>
<div class="t" style="left:159.84px;top:1100px;font-size:20px;line-height:22px;color:#cacaca;">8</div>
<div class="t" style="left:159.84px;top:1124px;font-size:20px;line-height:22px;color:#cacaca;">0</div>
<div class="t" style="left:159.84px;top:1147px;font-size:20px;line-height:22px;color:#cacaca;">0</div>
<div class="t" style="left:159.57px;top:1260px;font-size:20px;line-height:22px;color:#cacaca;">1</div>
<div class="t" style="left:159.84px;top:1284px;font-size:20px;line-height:22px;color:#cacaca;">0</div>
<div class="t" style="left:159.84px;top:1308px;font-size:20px;line-height:22px;color:#cacaca;">0</div>
<div class="t" style="left:159.84px;top:1331px;font-size:20px;line-height:22px;color:#cacaca;">0</div>
<div class="t" style="left:159.57px;top:1444px;font-size:20px;line-height:22px;color:#cacaca;">1</div>
<div class="t" style="left:159.84px;top:1468px;font-size:20px;line-height:22px;color:#cacaca;">2</div>
<div class="t" style="left:159.84px;top:1492px;font-size:20px;line-height:22px;color:#cacaca;">0</div>
<div class="t" style="left:159.84px;top:1515px;font-size:20px;line-height:22px;color:#cacaca;">0</div>
<div class="t" style="left:173.41px;top:1605px;font-size:22px;line-height:25px;color:#555;font-weight:bold;">?</div>
<div class="t" style="left:215.31px;top:1604px;font-size:21.6px;line-height:25px;color:#d4d4d4;font-weight:bold;letter-spacing:-0.941px;">Click</div>
<div class="t" style="left:270.57px;top:1604px;font-size:21.6px;line-height:25px;color:#d4d4d4;letter-spacing:-0.607px;">the object to select</div>
<div class="t" style="left:453.07px;top:1604px;font-size:21.6px;line-height:25px;color:#d4d4d4;">|</div>
<div class="t" style="left:470.88px;top:1604px;font-size:21.6px;line-height:25px;color:#d4d4d4;font-weight:bold;letter-spacing:-0.123px;">Shift+Click</div>
<div class="t" style="left:589.27px;top:1604px;font-size:21.6px;line-height:25px;color:#d4d4d4;letter-spacing:-0.584px;">to select multiple object</div>
<div class="t" style="left:813.47px;top:1604px;font-size:21.6px;line-height:25px;color:#d4d4d4;">|</div>
<div class="t" style="left:831.96px;top:1604px;font-size:21.6px;line-height:25px;color:#d4d4d4;font-weight:bold;letter-spacing:0.395px;">Alt+Drag</div>
<div class="t" style="left:930.97px;top:1604px;font-size:21.6px;line-height:25px;color:#d4d4d4;letter-spacing:-0.530px;">the object to duplicate</div>
<div class="t" style="left:167.22px;top:1651px;font-size:20.8px;line-height:23px;color:#e0e0e0;letter-spacing:0.095px;">40.64%</div>
<div class="t" style="left:313.19px;top:1651px;font-size:20.8px;line-height:23px;color:#e0e0e0;letter-spacing:1.176px;">0°</div>
<div class="t" style="left:534.92px;top:1651px;font-size:20.8px;line-height:23px;color:#e0e0e0;">1</div>
<div class="t" style="left:889.06px;top:1651px;font-size:20.8px;line-height:23px;color:#d4d4d4;letter-spacing:-0.459px;">Selection</div>
<div class="b" style="left:2096.2px;top:69.8px;width:2px;height:1606px;background:#424242;"></div>
<div class="b" style="left:2098.2px;top:69.8px;width:2px;height:1606px;background:#555;"></div>
<div class="b" style="left:2100.2px;top:69.8px;width:583.9px;height:1606px;background:#424242;"></div>
<div class="b" style="left:2102px;top:69.8px;width:580px;height:22.2px;background:#4a4a4a;"></div>
<div class="b" style="left:2102px;top:94.2px;width:74.2px;height:79.6px;background:#5c5c5c;"></div>
<div class="b" style="left:2102px;top:176px;width:74.2px;height:1499.5px;background:#5c5c5c;"></div>
<div class="b" style="left:2178px;top:94.2px;width:2.2px;height:1581.3px;background:#555;"></div>
<div class="b" style="left:2181.8px;top:94.2px;width:500.2px;height:1581.3px;background:#5c5c5c;"></div>
<div class="b" style="left:2181.8px;top:94.2px;width:500.2px;height:52.8px;background:#4a4a4a;"></div>
<div class="b" style="left:2181.8px;top:94.2px;width:132.2px;height:52.8px;background:#5c5c5c;"></div>
<div class="b" style="left:2314px;top:94.2px;width:1.8px;height:52.8px;background:#424242;"></div>
<div class="b" style="left:2408.2px;top:94.2px;width:1.8px;height:52.8px;background:#424242;"></div>
<div class="b" style="left:2526.2px;top:94.2px;width:1.8px;height:52.8px;background:#424242;"></div>
<div class="t" style="left:2200.22px;top:108px;font-size:20.6px;line-height:23px;color:#f2f2f2;font-weight:bold;letter-spacing:-0.397px;">Properties</div>
<div class="t" style="left:2332.42px;top:108px;font-size:20.6px;line-height:23px;color:#c4c4c4;font-weight:bold;letter-spacing:-1.041px;">Layers</div>
<div class="t" style="left:2428.12px;top:108px;font-size:20.6px;line-height:23px;color:#c4c4c4;font-weight:bold;letter-spacing:-0.562px;">Libraries</div>
<svg style="left:0;top:0" width="2692" height="1685" viewBox="0 0 2692 1685">
<path d="M2158 76.6 L2153.6 80.7 L2158 84.8 M2164.8 76.6 L2160.4 80.7 L2164.8 84.8" stroke="#d0d0d0" stroke-width="1.5" fill="none"/>
<path d="M2658 76.6 L2662.4 80.7 L2658 84.8 M2664.8 76.6 L2669.2 80.7 L2664.8 84.8" stroke="#d0d0d0" stroke-width="1.5" fill="none"/>
<rect x="2120.00" y="100" width="2" height="8" fill="#3e3e3e"/>
<rect x="2124.02" y="100" width="2" height="8" fill="#3e3e3e"/>
<rect x="2128.04" y="100" width="2" height="8" fill="#3e3e3e"/>
<rect x="2132.06" y="100" width="2" height="8" fill="#3e3e3e"/>
<rect x="2136.08" y="100" width="2" height="8" fill="#3e3e3e"/>
<rect x="2140.10" y="100" width="2" height="8" fill="#3e3e3e"/>
<rect x="2144.12" y="100" width="2" height="8" fill="#3e3e3e"/>
<rect x="2148.14" y="100" width="2" height="8" fill="#3e3e3e"/>
<rect x="2152.16" y="100" width="2" height="8" fill="#3e3e3e"/>
<rect x="2156.18" y="100" width="2" height="8" fill="#3e3e3e"/>
<path d="M2129 123.8 L2153 123.8 Q2158 123.8 2158 128.8 L2158 143.1 Q2158 148.1 2153 148.1 L2141.2 148.1 L2130 158.4 L2130 148.1 L2129 148.1 Q2124 148.1 2124 143.1 L2124 128.8 Q2124 123.8 2129 123.8 Z" fill="#d0d0d0"/>
<rect x="2182" y="213" width="476" height="2" fill="#535353"/>
<rect x="2182" y="463.7" width="476" height="2" fill="#535353"/>
<rect x="2182" y="807.5" width="476" height="2" fill="#535353"/>
<rect x="2182" y="975.4" width="476" height="2" fill="#535353"/>
<rect x="2182" y="1127.3" width="476" height="2" fill="#535353"/>
<path d="M2207.1 309.2 L2235.3 309.2 L2235.3 337.1 L2207.1 337.1 Z" stroke="#d0d0d0" stroke-width="2" fill="none"/>
<rect x="2202.9" y="305.0" width="8.4" height="8.4" fill="#5c5c5c" stroke="#d0d0d0" stroke-width="2"/>
<rect x="2202.9" y="319.0" width="8.4" height="8.4" fill="#5c5c5c" stroke="#d0d0d0" stroke-width="2"/>
<rect x="2202.9" y="332.90000000000003" width="8.4" height="8.4" fill="#5c5c5c" stroke="#d0d0d0" stroke-width="2"/>
<rect x="2216.9" y="305.0" width="8.4" height="8.4" fill="#5c5c5c" stroke="#d0d0d0" stroke-width="2"/>
<rect x="2216.5" y="318.59999999999997" width="9.2" height="9.2" fill="#e0e0e0"/>
<rect x="2216.9" y="332.90000000000003" width="8.4" height="8.4" fill="#5c5c5c" stroke="#d0d0d0" stroke-width="2"/>
<rect x="2231.1000000000004" y="305.0" width="8.4" height="8.4" fill="#5c5c5c" stroke="#d0d0d0" stroke-width="2"/>
<rect x="2231.1000000000004" y="319.0" width="8.4" height="8.4" fill="#5c5c5c" stroke="#d0d0d0" stroke-width="2"/>
<rect x="2231.1000000000004" y="332.90000000000003" width="8.4" height="8.4" fill="#5c5c5c" stroke="#d0d0d0" stroke-width="2"/>
<rect x="2291.2" y="277.1" width="110.60000000000036" height="39.799999999999955" rx="4.5" fill="#4a4a4a" stroke="#686868" stroke-width="2"/>
<rect x="2291.2" y="329.3" width="110.60000000000036" height="39.5" rx="4.5" fill="#4a4a4a" stroke="#686868" stroke-width="2"/>
<rect x="2469.9" y="277.1" width="110.59999999999991" height="39.799999999999955" rx="4.5" fill="#4a4a4a" stroke="#686868" stroke-width="2"/>
<rect x="2469.9" y="329.3" width="110.59999999999991" height="39.5" rx="4.5" fill="#4a4a4a" stroke="#686868" stroke-width="2"/>
<rect x="2287" y="381.1" width="110.59999999999991" height="39.5" rx="4.5" fill="#4a4a4a" stroke="#686868" stroke-width="2"/>
<rect x="2362" y="382" width="34.6" height="37.6" rx="3" fill="#565656"/><rect x="2361" y="382" width="1.8" height="37.6" fill="#686868"/>
<rect x="2287" y="381.1" width="110.6" height="39.5" rx="4.5" fill="none" stroke="#686868" stroke-width="2"/>
<path d="M2370.7 397.59999999999997 L2377.7 404.8 L2384.7 397.59999999999997" stroke="#e0e0e0" stroke-width="2.2" fill="none"/>
<path d="M2273.6 402.8 L2253.6 402.8 L2268.2 387" stroke="#d0d0d0" stroke-width="2.6" fill="none" stroke-linejoin="round" stroke-linecap="round"/><path d="M2263.4 393.4 Q2270 396.6 2270 402.8" stroke="#d0d0d0" stroke-width="1.6" fill="none"/>
<circle cx="2279" cy="393.7" r="1.6" fill="#d0d0d0"/><circle cx="2279" cy="402.5" r="1.6" fill="#d0d0d0"/>
<path d="M2484 394.4 L2492 403 L2484 411.6 Z" fill="none" stroke="#d0d0d0" stroke-width="1.8"/><path d="M2509.8 393.4 L2499.6 403 L2509.8 412.6 Z" fill="#d0d0d0"/><path d="M2496 390.6 L2496 415.4" stroke="#d0d0d0" stroke-width="1.6" stroke-dasharray="1.6 1.6"/>
<path d="M2533.6 390.2 L2555 390.2 L2544.3 399.6 Z" fill="#d0d0d0"/><path d="M2535.4 415.4 L2553.2 415.4 L2544.3 407.4 Z" fill="none" stroke="#d0d0d0" stroke-width="1.8"/><path d="M2532.4 403.4 L2556.2 403.4" stroke="#d0d0d0" stroke-width="1.6" stroke-dasharray="1.6 1.6"/>
<g transform="translate(2624.5 324.2)"><path d="M-5.4 -2.4 L-5.4 -6.6 Q-5.4 -13 0 -13 Q5.4 -13 5.4 -6.6 L5.4 -2.4 M-5.4 2.4 L-5.4 6.6 Q-5.4 13 0 13 Q5.4 13 5.4 6.6 L5.4 2.4" stroke="#d0d0d0" stroke-width="3.2" fill="none"/><path d="M-14 -14.4 L14.6 14.8" stroke="#5c5c5c" stroke-width="6.5"/><path d="M-13.6 -14 L14.2 14.4" stroke="#d0d0d0" stroke-width="2.6"/></g>
<circle cx="2619.7" cy="443.6" r="3.4" fill="#d0d0d0"/><circle cx="2630.2" cy="443.6" r="3.4" fill="#d0d0d0"/><circle cx="2640.4" cy="443.6" r="3.4" fill="#d0d0d0"/>
<rect x="2203.2" y="538.8" width="33.8" height="34.1" fill="#575757" stroke="#3c3c3c" stroke-width="2"/>
<rect x="2203" y="596.4" width="34.2" height="34.5" fill="#e2e2e2" stroke="#3a3a3a" stroke-width="1.6"/>
<rect x="2212.4" y="606" width="15.4" height="15.8" fill="#4a4a4a" stroke="#3a3a3a" stroke-width="1.5"/>
<path d="M2204.6 629.4 L2235.8 598" stroke="#ff0000" stroke-width="4.4"/>
<rect x="2360.5" y="594.4" width="137.4" height="38.8" rx="4.5" fill="#575757" stroke="#686868" stroke-width="2.2"/>
<rect x="2396" y="595.2" width="66" height="37.2" fill="#4a4a4a"/><rect x="2395.2" y="595.2" width="1.5" height="37.2" fill="#6a6a6a"/><rect x="2461.6" y="595.2" width="1.5" height="37.2" fill="#6a6a6a"/>
<path d="M2370.8 606.7 L2377.8 599.7 L2384.8 606.7" stroke="#e0e0e0" stroke-width="2.2" fill="none"/>
<path d="M2370.8 620.5 L2377.8 627.5 L2384.8 620.5" stroke="#e0e0e0" stroke-width="2.2" fill="none"/>
<path d="M2470.8 610.6999999999999 L2477.8 617.9 L2484.8 610.6999999999999" stroke="#e0e0e0" stroke-width="2.2" fill="none"/>
<rect x="2204.4" y="656.9" width="31" height="30.2" fill="#606060" stroke="#cacaca" stroke-width="1.6"/>
<rect x="2205.20" y="664.85" width="7.35" height="7.15" fill="#7e7e7e"/>
<rect x="2205.20" y="679.15" width="7.35" height="7.15" fill="#7e7e7e"/>
<rect x="2212.55" y="657.70" width="7.35" height="7.15" fill="#7e7e7e"/>
<rect x="2212.55" y="672.00" width="7.35" height="7.15" fill="#7e7e7e"/>
<rect x="2219.90" y="664.85" width="7.35" height="7.15" fill="#7e7e7e"/>
<rect x="2219.90" y="679.15" width="7.35" height="7.15" fill="#7e7e7e"/>
<rect x="2227.25" y="657.70" width="7.35" height="7.15" fill="#7e7e7e"/>
<rect x="2227.25" y="672.00" width="7.35" height="7.15" fill="#7e7e7e"/>
<rect x="2204.4" y="656.9" width="31" height="30.2" fill="none" stroke="#cacaca" stroke-width="1.6"/>
<rect x="2360.5" y="652.5" width="137.4" height="38.8" rx="4.5" fill="#575757" stroke="#686868" stroke-width="2.2"/>
<path d="M2364.5 653.3 L2462 653.3 L2462 690.5 L2364.5 690.5 Q2361.3 690.5 2361.3 687.3 L2361.3 656.5 Q2361.3 653.3 2364.5 653.3 Z" fill="#4a4a4a"/><rect x="2461.6" y="653.3" width="1.5" height="37.2" fill="#6a6a6a"/>
<path d="M2474.2000000000003 665.6 L2481.4 672.2 L2474.2000000000003 678.8000000000001" stroke="#e0e0e0" stroke-width="2.2" fill="none"/>
<path d="M2262.5 628.4 L2317 628.4" stroke="#d0d0d0" stroke-width="1.5" stroke-dasharray="1.4 1.4"/>
<path d="M2262.5 685.9 L2328 685.9" stroke="#d0d0d0" stroke-width="1.5" stroke-dasharray="1.4 1.4"/>
<path d="M2218.4 749.2 L2224.2 749.2 L2221.3 752.6 Z" fill="#d0d0d0"/>
<circle cx="2608.3" cy="787.8" r="3.4" fill="#d0d0d0"/><circle cx="2618.9" cy="787.8" r="3.4" fill="#d0d0d0"/><circle cx="2629.3" cy="787.8" r="3.4" fill="#d0d0d0"/>
<path d="M2214.6 888.4 L2214.6 893.6 M2207.8 896 L2213 896" stroke="#d0d0d0" stroke-width="1.4"/>
<path d="M2215.2 895.2 L2231.4 895.2 L2237.4 901.4 L2237.4 918.2 L2215.2 918.2 Z" fill="#787878" stroke="#d0d0d0" stroke-width="1.6"/><path d="M2231.2 895.4 L2231.2 901.6 L2237.2 901.6" fill="none" stroke="#d0d0d0" stroke-width="1.4"/>
<path d="M2243.5 904.0999999999999 L2249.5 910.5 L2255.5 904.0999999999999" stroke="#d8d8d8" stroke-width="2" fill="none"/>
<rect x="2283.7" y="886.7" width="2" height="36.2" fill="#d0d0d0"/><rect x="2288" y="890.8" width="16.2" height="11.4" fill="#d0d0d0"/><rect x="2288" y="907" width="25.9" height="10.2" fill="#d0d0d0"/>
<rect x="2357.9" y="886.7" width="2" height="36.2" fill="#d0d0d0"/><rect x="2350.6" y="890.8" width="16.9" height="11.4" fill="#d0d0d0"/><rect x="2345.8" y="907" width="25.9" height="10.2" fill="#d0d0d0"/>
<rect x="2434.3" y="886.7" width="2" height="36.2" fill="#d0d0d0"/><rect x="2415.8" y="890.8" width="16.2" height="11.4" fill="#d0d0d0"/><rect x="2405.6" y="907" width="26.4" height="10.2" fill="#d0d0d0"/>
<rect x="2461.7" y="888.4" width="36.1" height="2" fill="#d0d0d0"/><rect x="2468" y="893" width="10.3" height="25.9" fill="#d0d0d0"/><rect x="2482.5" y="893" width="11.4" height="15.9" fill="#d0d0d0"/>
<rect x="2521.7" y="903.2" width="36.6" height="2" fill="#d0d0d0"/><rect x="2528.3" y="891.1" width="10" height="26.1" fill="#d0d0d0"/><rect x="2542.2" y="895.8" width="12" height="16.7" fill="#d0d0d0"/>
<rect x="2582" y="919" width="36" height="2" fill="#d0d0d0"/><rect x="2588" y="891.1" width="9.8" height="25.6" fill="#d0d0d0"/><rect x="2602.2" y="900.6" width="11.7" height="16.1" fill="#d0d0d0"/>
<circle cx="2619.5" cy="957" r="3.4" fill="#d0d0d0"/><circle cx="2630" cy="957" r="3.4" fill="#d0d0d0"/><circle cx="2640.3" cy="957" r="3.4" fill="#d0d0d0"/>
<rect x="2213.9" y="1060.3" width="20" height="19.4" fill="#d0d0d0"/><rect x="2221.7" y="1067.5" width="20.5" height="20.5" fill="#d0d0d0"/>
<rect x="2275.8" y="1060.3" width="20" height="19.4" fill="#d0d0d0"/><rect x="2285" y="1068.3" width="18.4" height="18.9" fill="#5c5c5c" stroke="#d0d0d0" stroke-width="1.6"/>
<rect x="2338.8" y="1061.1" width="18.2" height="17.8" fill="none" stroke="#d0d0d0" stroke-width="1.6"/><rect x="2346.6" y="1068.3" width="18.4" height="18.9" fill="none" stroke="#d0d0d0" stroke-width="1.6"/><rect x="2346.6" y="1068.3" width="10.4" height="10.6" fill="#d0d0d0"/>
<rect x="2400" y="1060.3" width="20" height="19.4" fill="#d0d0d0"/><rect x="2407.8" y="1067.5" width="20" height="20.5" fill="#d0d0d0"/><rect x="2409.4" y="1069.1" width="9" height="9" fill="#5c5c5c"/>
<rect x="2525.8" y="1038.3" width="126.2" height="42.3" rx="4" fill="#676767"/>
<circle cx="2619.5" cy="1104.2" r="3.4" fill="#d0d0d0"/><circle cx="2630" cy="1104.2" r="3.4" fill="#d0d0d0"/><circle cx="2640.3" cy="1104.2" r="3.4" fill="#d0d0d0"/>
<rect x="2203.1000000000004" y="1209.8" width="214.69999999999982" height="39.90000000000009" rx="3.6" fill="none" stroke="#7c7c7c" stroke-width="2"/>
<rect x="2440.2000000000003" y="1209.8" width="214.69999999999982" height="39.90000000000009" rx="3.6" fill="none" stroke="#7c7c7c" stroke-width="2"/>
<rect x="2203.1000000000004" y="1271.8" width="225.5" height="40.299999999999955" rx="3.6" fill="none" stroke="#7c7c7c" stroke-width="2"/>
<rect x="2451.0" y="1271.8" width="203.9000000000001" height="40.299999999999955" rx="3.6" fill="none" stroke="#7c7c7c" stroke-width="2"/>
<rect x="2203.1000000000004" y="1333.8" width="451.7999999999997" height="40.200000000000045" rx="3.6" fill="none" stroke="#7c7c7c" stroke-width="2"/>
<rect x="2203.1000000000004" y="1395.8" width="407.5" height="40.200000000000045" rx="3.6" fill="none" stroke="#7c7c7c" stroke-width="2"/>
<rect x="2613.8" y="1395.8" width="41.09999999999991" height="40.200000000000045" rx="3.6" fill="#4e4e4e" stroke="#7c7c7c" stroke-width="2"/>
<path d="M2626.7000000000003 1412.1999999999998 L2632.9 1419.0 L2639.1 1412.1999999999998" stroke="#d8d8d8" stroke-width="2" fill="none"/>
<rect x="2203.1000000000004" y="1457.8" width="451.7999999999997" height="40.200000000000045" rx="3.6" fill="none" stroke="#7c7c7c" stroke-width="2"/>
<rect x="2203.1000000000004" y="1519.8" width="451.7999999999997" height="40.200000000000045" rx="3.6" fill="none" stroke="#7c7c7c" stroke-width="2"/>
<circle cx="2341" cy="1540" r="6.6" fill="#1070f5"/>
</svg>
<div class="t" style="left:2200.52px;top:171px;font-size:21.4px;line-height:24px;color:#d8d8d8;letter-spacing:-1.001px;">Group</div>
<div class="t" style="left:2201.12px;top:239px;font-size:21.4px;line-height:24px;color:#d8d8d8;letter-spacing:-0.876px;">Transform</div>
<div class="t" style="left:2261.02px;top:287px;font-size:21.4px;line-height:24px;color:#d8d8d8;letter-spacing:-0.285px;">X:</div>
<div class="t" style="left:2261.03px;top:339px;font-size:21.4px;line-height:24px;color:#d8d8d8;letter-spacing:-1.295px;">Y:</div>
<div class="t" style="left:2433.71px;top:287px;font-size:21.4px;line-height:24px;color:#d8d8d8;letter-spacing:-1.496px;">W:</div>
<div class="t" style="left:2432.04px;top:338px;font-size:21.4px;line-height:24px;color:#d8d8d8;letter-spacing:1.009px;">H:</div>
<div class="t" style="left:2298.37px;top:283px;font-size:21.4px;line-height:24px;color:#e4e4e4;letter-spacing:-0.763px;">1994.5744</div>
<div class="b" style="left:2292px;top:330px;width:105.8px;height:38px;overflow:hidden"><div class="t" style="left:6.81px;top:4px;font-size:21.4px;line-height:24px;color:#e4e4e4;letter-spacing:-0.658px;">491.8979 px</div></div>
<div class="t" style="left:2476.37px;top:283px;font-size:21.4px;line-height:24px;color:#e4e4e4;letter-spacing:-0.682px;">1200 px</div>
<div class="t" style="left:2476.37px;top:334px;font-size:21.4px;line-height:24px;color:#e4e4e4;letter-spacing:-0.682px;">1000 px</div>
<div class="t" style="left:2291.66px;top:387px;font-size:21.4px;line-height:24px;color:#e4e4e4;letter-spacing:0.662px;">0°</div>
<div class="t" style="left:2202.16px;top:489px;font-size:21.4px;line-height:24px;color:#d8d8d8;letter-spacing:-1.224px;">Appearance</div>
<div class="t" style="left:2211.80px;top:541px;font-size:30px;line-height:33px;color:#e0e0e0;">?</div>
<div class="t" style="left:2260.74px;top:548px;font-size:21.4px;line-height:24px;color:#d8d8d8;letter-spacing:-0.349px;">Fill</div>
<div class="t" style="left:2261.53px;top:605px;font-size:21.4px;line-height:24px;color:#d8d8d8;letter-spacing:-0.885px;">Stroke</div>
<div class="t" style="left:2261.49px;top:663px;font-size:21.4px;line-height:24px;color:#d8d8d8;letter-spacing:-1.032px;">Opacity</div>
<div class="t" style="left:2365.87px;top:658px;font-size:21.4px;line-height:24px;color:#e4e4e4;letter-spacing:-0.613px;">100%</div>
<div class="t" style="left:2195.26px;top:725px;font-size:28px;line-height:31px;color:#c8c8c8;font-style:italic;letter-spacing:-1.256px;">fx</div>
<div class="t" style="left:2202.16px;top:833px;font-size:21.4px;line-height:24px;color:#d8d8d8;letter-spacing:-0.839px;">Align</div>
<div class="t" style="left:2200.44px;top:1002px;font-size:21.4px;line-height:24px;color:#d8d8d8;letter-spacing:-0.660px;">Pathfinder</div>
<div class="t" style="left:2555.24px;top:1050px;font-size:21.4px;line-height:24px;color:#8c8c8c;letter-spacing:-1.129px;">Expand</div>
<div class="t" style="left:2201.19px;top:1164px;font-size:21.4px;line-height:24px;color:#d8d8d8;letter-spacing:-0.911px;">Quick Actions</div>
<div class="t" style="left:2270.85px;top:1220px;font-size:21.4px;line-height:24px;color:#e2e2e2;letter-spacing:-0.640px;">Ungroup</div>
<div class="t" style="left:2486.03px;top:1220px;font-size:21.4px;line-height:24px;color:#e2e2e2;letter-spacing:-0.550px;">Isolate Group</div>
<div class="t" style="left:2245.63px;top:1282px;font-size:21.4px;line-height:24px;color:#e2e2e2;letter-spacing:-1.063px;">Save as Symbol</div>
<div class="t" style="left:2520.54px;top:1282px;font-size:21.4px;line-height:24px;color:#e2e2e2;letter-spacing:-1.022px;">Recolor</div>
<div class="t" style="left:2394.26px;top:1344px;font-size:21.4px;line-height:24px;color:#e2e2e2;letter-spacing:-0.990px;">Arrange</div>
<div class="t" style="left:2333.93px;top:1406px;font-size:21.4px;line-height:24px;color:#e2e2e2;letter-spacing:-0.687px;">Start Global Edit</div>
<div class="t" style="left:2364.42px;top:1468px;font-size:21.4px;line-height:24px;color:#e2e2e2;letter-spacing:-0.996px;">Gen Shape Fill</div>
<div class="t" style="left:2357.92px;top:1530px;font-size:21.4px;line-height:24px;color:#e2e2e2;letter-spacing:-0.934px;">Generative Expand</div>
<svg style="left:0;top:0" width="2692" height="1685" viewBox="0 0 2692 1685">
<defs><clipPath id="ab"><rect x="632.0" y="429.4" width="1104.0" height="920.0000000000001"/></clipPath></defs>
<rect x="629.2" y="427.7" width="1109.8" height="924.8000000000001" fill="#57534c"/>
<g clip-path="url(#ab)" stroke="#5590ff" stroke-width="1.55" stroke-linejoin="round">
<path d="M632.0 429.4 L1736.0 429.4 L1736.0 767.4 L632.0 767.4 Z" fill="#e8dfce"/>
<path d="M632.0 767.4 L1736.0 767.4 L1736.0 1100 L632.0 1100 Z" fill="#84cde8"/>
<circle cx="1107" cy="450.5" r="91.7" fill="#ffcc5a"/>
<path d="M706.9 542 C722 509 755 495.3 779.8 495.3 C805 495.3 828 504 841.9 515.2 C852 523.5 863 530.1 875.8 530.1 C891 530.1 903 517.7 917.2 517.7 C932 517.7 945 528 949.5 542 Z" fill="#e2e2e2"/>
<path d="M1518.2 570.7 C1500 570.7 1500 544.8 1518.2 544.5 C1545 544 1560 540 1578.7 532.6 C1598 525 1618 513 1636.6 507.7 C1650 504.5 1663 505 1678 509.4 C1697 515 1712 523 1740 523 L1740 570.7 Z" fill="#e2e2e2"/>
<path d="M632.0 598 L697 598 C722 598 737 611 752.5 631 C768 650 783 673.9 815.4 673.9 L951 673.9 C981 673.9 1000 692 1008 716 L1023.6 767.4 L632.0 767.4 Z" fill="#3a4f42"/>
<path d="M632.0 767.4 L1023.6 767.4 L1009 792 C1001 806 985 815.2 951 815.2 L812 815.2 C784 815.2 768 828 750 838 C732 848 716 853.4 697 853.4 L632.0 853.4 Z" fill="#4b95e8"/>
<path d="M1340.0 690.0 C1346.7 691.3 1365.0 695.9 1380.0 698.0 C1395.0 700.1 1413.2 702.9 1429.7 702.9 C1446.2 702.9 1462.8 701.0 1479.3 698.0 C1495.8 695.0 1512.4 690.2 1529.0 684.7 C1545.6 679.2 1564.9 669.6 1578.7 664.8 C1592.5 660.0 1599.7 657.9 1611.8 655.7 C1623.9 653.6 1637.7 651.8 1651.5 651.9 C1665.3 652.0 1679.8 653.7 1694.6 656.6 C1709.3 659.5 1732.4 667.1 1740.0 669.2 L1740 767.4 L1340 767.4 Z" fill="#387b40"/>
<path d="M1340 767.4 L1740 767.4 L1740 832.4 C1732.4 834.4 1709.3 841.9 1694.6 844.5 C1679.8 847.1 1665.3 848.4 1651.5 848.3 C1637.7 848.1 1623.9 846.0 1611.8 843.6 C1599.7 841.2 1592.5 838.7 1578.7 833.7 C1564.9 828.7 1545.6 819.2 1529.0 813.8 C1512.4 808.4 1496.1 804.1 1479.3 801.4 C1462.5 798.6 1444.5 797.3 1428.0 797.3 C1411.5 797.3 1394.7 799.9 1380.0 801.4 C1365.3 802.9 1346.7 805.2 1340.0 806.0 Z" fill="#4b95e8"/>
<path d="M868.8 866 L868.8 912.6 L834.1 912.6 C835 896 846 873 868.8 866 Z" fill="#e2e2e2"/>
<path d="M820.8 912.8 L885.4 912.8 L879.4 933 L827 933 Z" fill="#387b40"/>
<path d="M1045.5 835.2 L1225.0 835.2 L1217.5 918.8 L1117.9 918.8 Z" fill="#3a4f42"/>
<path d="M1117.9 918.8 L1217.5 918.8 L1204.0 1070 L1117.9 1050 Z" fill="#e8dfce"/>
<path d="M1045.5 835.2 L1117.9 918.8 L1117.9 1052 L966 1024 L966 918.6 Z" fill="#e2e2e2"/>
<path d="M1016.3 1040 L1016.3 986.1 A24.45 24.45 0 0 1 1065.2 986.1 L1065.2 1045 Z" fill="#3a4f42"/>
<circle cx="1297.2" cy="508.2" r="18" fill="#ff6136"/>
<path d="M1248.4 571.5 A48.9 52 0 0 1 1346 571.5 Z" fill="#ff6136"/>
<circle cx="1297.2" cy="508.2" r="17.2" fill="#ff6136" stroke="none"/>
<path d="M1248.6 571.5 L1345.8 571.5 L1394.9 1061.1 L1283.1 1077.1 L1204.8 1061.6 Z" fill="#e2e2e2"/>
<path d="M1222.4 631.9 L1374.5 631.9 L1374.5 661 L1222.4 661 Z" fill="#ff6136"/>
<path d="M1243.2 631.9 L1351.7 631.9 L1357.7 693.7 L1234.5 728.4 Z" fill="#ff6136"/>
<path d="M1225.4 834.4 L1367.1 792.5 L1378.8 905.6 L1214.4 962.4 Z" fill="#ff6136"/>
<path d="M1243.2 631.9 L1204.7 1061.6 M1351.7 631.9 L1394.9 1061.1" fill="none"/>
<rect x="1284" y="737.9" width="25.4" height="43.0" rx="1.2" fill="#3a4f42" stroke-width="1.9"/>
<rect x="1284" y="855.6" width="25.4" height="43.89999999999998" rx="1.2" fill="#3a4f42" stroke-width="1.9"/>
<rect x="1284" y="974.8" width="25.4" height="43.40000000000009" rx="1.2" fill="#3a4f42" stroke-width="1.9"/>
<path d="M1231.1 767.4 L1365.0 767.4" fill="none"/>
<path d="M632.0 963.2 L887.4 1008.5 L805 1203.4 C776.2 1212.5 660.8 1249.1 632.0 1258.2 Z" fill="#ffcc5a"/>
<path d="M887.4 1008.5 L1283.1 1077.1 C1259.4 1081.9 1187.9 1095.1 1140.7 1106.1 C1093.5 1117.1 1036.8 1133.0 1000.0 1143.3 C963.2 1153.6 952.5 1157.8 920.0 1167.8 C887.5 1177.8 824.2 1197.5 805.0 1203.4 Z" fill="#ff6136"/>
<path d="M632.0 1258.2 C660.8 1249.1 757.0 1218.5 805.0 1203.4 C853.0 1188.3 887.5 1177.8 920.0 1167.8 C952.5 1157.8 963.2 1153.6 1000.0 1143.3 C1036.8 1133.0 1117.2 1112.3 1140.7 1106.1 L1074.5 1279.6 L632.0 1330.8 Z" fill="#e8dfce"/>
<path d="M1140.7 1106.1 C1164.4 1101.3 1246.5 1083.8 1283.1 1077.1 C1319.6 1070.4 1341.4 1068.8 1360.0 1066.1 C1378.6 1063.4 1375.6 1062.9 1394.9 1061.1 C1414.2 1059.3 1462.3 1056.4 1475.8 1055.5 L1425.2 1239.9 L1074.5 1279.6 Z" fill="#ffcc5a"/>
<path d="M1475.8 1055.5 C1510.3 1053.3 1648.5 1044.7 1683.1 1042.5 L1647.8 1349.4 L1395.8 1349.4 Z" fill="#387b40"/>
<path d="M1683.1 1042.5 C1691.9 1042.0 1727.2 1040.2 1736.0 1039.7 L1736.0 1349.4 L1647.8 1349.4 Z" fill="#3a4f42"/>
<path d="M632.0 1330.8 L1425.2 1239.9 L1395.8 1349.4 L632.0 1349.4 Z" fill="#3a4f42"/>
</g>
<rect x="847.4" y="884.3" width="9.4" height="9.5" fill="#5590ff"/><rect x="848.2" y="918.2" width="9.6" height="9.5" fill="#5590ff"/>
<rect x="630.8" y="427.9" width="1106.4" height="3" fill="#5590ff"/><rect x="630.8" y="1347.9" width="1106.4" height="3" fill="#5590ff"/><rect x="630.8" y="427.9" width="2.3" height="923.0000000000001" fill="#5590ff"/><rect x="1734.9" y="427.9" width="2.3" height="923.0000000000001" fill="#5590ff"/>
<rect x="627.0" y="425.0" width="10" height="10" fill="#e2e2e2" stroke="#5590ff" stroke-width="2"/>
<rect x="627.0" y="884.4000000000001" width="10" height="10" fill="#e2e2e2" stroke="#5590ff" stroke-width="2"/>
<rect x="627.0" y="1345.0" width="10" height="10" fill="#e2e2e2" stroke="#5590ff" stroke-width="2"/>
<rect x="1179.0" y="425.0" width="10" height="10" fill="#e2e2e2" stroke="#5590ff" stroke-width="2"/>
<rect x="1179.0" y="1345.0" width="10" height="10" fill="#e2e2e2" stroke="#5590ff" stroke-width="2"/>
<rect x="1731.0" y="425.0" width="10" height="10" fill="#e2e2e2" stroke="#5590ff" stroke-width="2"/>
<rect x="1731.0" y="884.4000000000001" width="10" height="10" fill="#e2e2e2" stroke="#5590ff" stroke-width="2"/>
<rect x="1731.0" y="1345.0" width="10" height="10" fill="#e2e2e2" stroke="#5590ff" stroke-width="2"/>
</svg>
<svg style="left:0;top:0" width="2692" height="1685" viewBox="0 0 2692 1685">
<rect x="712.4" y="1411.4" width="944" height="69" rx="9" fill="#5b5b5b" stroke="#3a3a3a" stroke-width="2.2"/>
<rect x="723.2" y="1419" width="7.8" height="53.4" rx="3.9" fill="#b6b6b6"/>
<rect x="752" y="1419" width="242.2" height="53.8" rx="4" fill="none" stroke="#7c7c7c" stroke-width="1.6"/>
<rect x="1006" y="1421" width="288.4" height="49.8" rx="3.5" fill="#5b5b5b" stroke="#4eb0ff" stroke-width="5.6"/>
<rect x="1009.6" y="1424.6" width="281.2" height="42.6" rx="1" fill="none" stroke="#3a3a3a" stroke-width="1.4"/>
<path d="M772.6 1444 L772.6 1459 M800.2 1448 L800.2 1459 M774.6 1459.6 L798.2 1459.6" stroke="#d0d0d0" stroke-width="2" fill="none"/>
<circle cx="772.6" cy="1459.6" r="2.6" fill="#5b5b5b" stroke="#d0d0d0" stroke-width="1.6"/><circle cx="800.2" cy="1459.6" r="2.6" fill="#5b5b5b" stroke="#d0d0d0" stroke-width="1.6"/>
<path d="M776.4 1443 L784 1443 L786 1450 L791.6 1452.4 L797.4 1447 L797.4 1455.4 L776.4 1455.4 Z" fill="#d0d0d0"/>
<path d="M797 1428.8 Q798.628 1434.5720000000001 804.4 1436.2 Q798.628 1437.828 797 1443.6000000000001 Q795.372 1437.828 789.6 1436.2 Q795.372 1434.5720000000001 797 1428.8 Z" fill="#d0d0d0"/>
<path d="M789.4 1438.3999999999999 Q790.544 1442.456 794.6 1443.6 Q790.544 1444.744 789.4 1448.8 Q788.256 1444.744 784.1999999999999 1443.6 Q788.256 1442.456 789.4 1438.3999999999999 Z" fill="#d0d0d0"/>
<path d="M784 1437.4 L788 1437.4" stroke="#d0d0d0" stroke-width="1.4" stroke-dasharray="1.4 1.4"/>
<circle cx="776.2" cy="1435.2" r="6.9" fill="#2d95ff"/>
<path d="M1023 1459.4 L1023 1446 L1027 1443 L1031.4 1450.6 L1035 1448.4 L1040.4 1455.4 L1040.4 1459.4 Z" fill="#d0d0d0"/>
<path d="M1040 1432.6 L1040 1440 M1037.6 1432.8 L1043 1432.8" stroke="#d0d0d0" stroke-width="1.6" fill="none"/>
<path d="M1043 1459 L1053.2 1459 M1053.2 1459 L1053.2 1447" stroke="#d0d0d0" stroke-width="1.6" stroke-dasharray="1.6 1.6" fill="none"/>
<path d="M1050 1432.0 Q1051.452 1437.148 1056.6 1438.6 Q1051.452 1440.052 1050 1445.1999999999998 Q1048.548 1440.052 1043.4 1438.6 Q1048.548 1437.148 1050 1432.0 Z" fill="#d0d0d0"/>
<path d="M1043.6 1442.8000000000002 Q1044.6119999999999 1446.3880000000001 1048.1999999999998 1447.4 Q1044.6119999999999 1448.412 1043.6 1452.0 Q1042.588 1448.412 1039.0 1447.4 Q1042.588 1446.3880000000001 1043.6 1442.8000000000002 Z" fill="#d0d0d0"/>
<circle cx="1028" cy="1435.2" r="6.9" fill="#2d95ff"/>
<rect x="1315.2" y="1431" width="30.4" height="29.6" fill="none" stroke="#d0d0d0" stroke-width="1.7"/>
<rect x="1318.6" y="1434.2" width="9" height="8.6" fill="#d0d0d0"/><rect x="1333.3" y="1440.4" width="9.4" height="9.4" rx="1" fill="#d0d0d0"/><rect x="1320.7" y="1448.3" width="9.4" height="9.4" rx="1" fill="#d0d0d0"/>
<path d="M1314 1430.4 L1346.4 1461.4" stroke="#5b5b5b" stroke-width="5.4"/><path d="M1314 1430.4 L1346.4 1461.4" stroke="#d0d0d0" stroke-width="2.4"/>
<rect x="1383.8" y="1441.2" width="9.6" height="8" fill="none" stroke="#d0d0d0" stroke-width="1.7"/>
<path d="M1375.3999999999999 1433.0 L1381.3999999999999 1438.8" stroke="#d0d0d0" stroke-width="1.8"/>
<path d="M1375.3999999999999 1438.8 L1381.3999999999999 1438.8 L1381.3999999999999 1432.8" stroke="#d0d0d0" stroke-width="1.8" fill="none"/>
<path d="M1401.8 1433.0 L1395.8 1438.8" stroke="#d0d0d0" stroke-width="1.8"/>
<path d="M1401.8 1438.8 L1395.8 1438.8 L1395.8 1432.8" stroke="#d0d0d0" stroke-width="1.8" fill="none"/>
<path d="M1375.3999999999999 1457.4 L1381.3999999999999 1451.6000000000001" stroke="#d0d0d0" stroke-width="1.8"/>
<path d="M1375.3999999999999 1451.6000000000001 L1381.3999999999999 1451.6000000000001 L1381.3999999999999 1457.6000000000001" stroke="#d0d0d0" stroke-width="1.8" fill="none"/>
<path d="M1401.8 1457.4 L1395.8 1451.6000000000001" stroke="#d0d0d0" stroke-width="1.8"/>
<path d="M1401.8 1451.6000000000001 L1395.8 1451.6000000000001 L1395.8 1457.6000000000001" stroke="#d0d0d0" stroke-width="1.8" fill="none"/>
<path d="M1447 1446.2 L1443.11 1432.13 A14.6 14.6 0 0 1 1452.12 1432.53 Z" fill="#cfcfcf"/>
<path d="M1447 1446.2 L1452.12 1432.53 A14.6 14.6 0 0 1 1459.18 1438.15 Z" fill="#dcdcdc"/>
<path d="M1447 1446.2 L1459.18 1438.15 A14.6 14.6 0 0 1 1461.59 1446.84 Z" fill="#b8b8b8"/>
<path d="M1447 1446.2 L1461.59 1446.84 A14.6 14.6 0 0 1 1458.42 1455.29 Z" fill="#a0a0a0"/>
<path d="M1447 1446.2 L1458.42 1455.29 A14.6 14.6 0 0 1 1450.89 1460.27 Z" fill="#8c8c8c"/>
<path d="M1447 1446.2 L1450.89 1460.27 A14.6 14.6 0 0 1 1441.88 1459.87 Z" fill="#6e6e6e"/>
<path d="M1447 1446.2 L1441.88 1459.87 A14.6 14.6 0 0 1 1434.82 1454.25 Z" fill="#3a3a3a"/>
<path d="M1447 1446.2 L1434.82 1454.25 A14.6 14.6 0 0 1 1432.41 1445.56 Z" fill="#787878"/>
<path d="M1447 1446.2 L1432.41 1445.56 A14.6 14.6 0 0 1 1435.58 1437.11 Z" fill="#9a9a9a"/>
<path d="M1447 1446.2 L1435.58 1437.11 A14.6 14.6 0 0 1 1443.11 1432.13 Z" fill="#b4b4b4"/>
<path d="M1447 1446.2 L1443.11 1432.13" stroke="#d8d8d8" stroke-width="1"/>
<path d="M1447 1446.2 L1459.18 1438.15" stroke="#d8d8d8" stroke-width="1"/>
<path d="M1447 1446.2 L1458.42 1455.29" stroke="#d8d8d8" stroke-width="1"/>
<path d="M1447 1446.2 L1441.88 1459.87" stroke="#d8d8d8" stroke-width="1"/>
<path d="M1447 1446.2 L1432.41 1445.56" stroke="#d8d8d8" stroke-width="1"/>
<circle cx="1447" cy="1446.2" r="15.4" fill="none" stroke="#d4d4d4" stroke-width="1.8"/>
<circle cx="1447" cy="1446.2" r="2.6" fill="#7a7a7a" stroke="#d4d4d4" stroke-width="1.3"/>
<rect x="1481.9" y="1429.1" width="34.2" height="33.8" fill="#5b5b5b" stroke="#3a3a3a" stroke-width="1.7"/>
<rect x="1535" y="1432" width="32.1" height="4" fill="#d0d0d0"/><rect x="1535" y="1440.4" width="32.1" height="5.5" fill="#d0d0d0"/><rect x="1535" y="1450.3" width="32.1" height="7.4" fill="#d0d0d0"/>
<circle cx="1601" cy="1446.2" r="4.1" fill="#d0d0d0"/>
<circle cx="1612.9" cy="1446.2" r="4.1" fill="#d0d0d0"/>
<circle cx="1625" cy="1446.2" r="4.1" fill="#d0d0d0"/>
</svg>
<div class="t" style="left:814.66px;top:1435px;font-size:24.7px;line-height:27px;color:#e4e4e4;letter-spacing:-0.645px;">Gen Shape Fill</div>
<div class="t" style="left:1065.76px;top:1435px;font-size:24.7px;line-height:27px;color:#e4e4e4;letter-spacing:-0.401px;">Generative Expand</div>
<div class="t" style="left:1490.60px;top:1431px;font-size:30px;line-height:33px;color:#e0e0e0;">?</div>
<div class="b" style="left:2.1px;top:1674.9px;width:2688px;height:2px;background:#444;"></div>
<div class="b" style="left:2.1px;top:1676.9px;width:2688px;height:6.2px;background:#5a5a5a;"></div>
<div class="b" style="left:0px;top:1683.1px;width:2692px;height:1.9px;background:#444;"></div>
</body></html>
